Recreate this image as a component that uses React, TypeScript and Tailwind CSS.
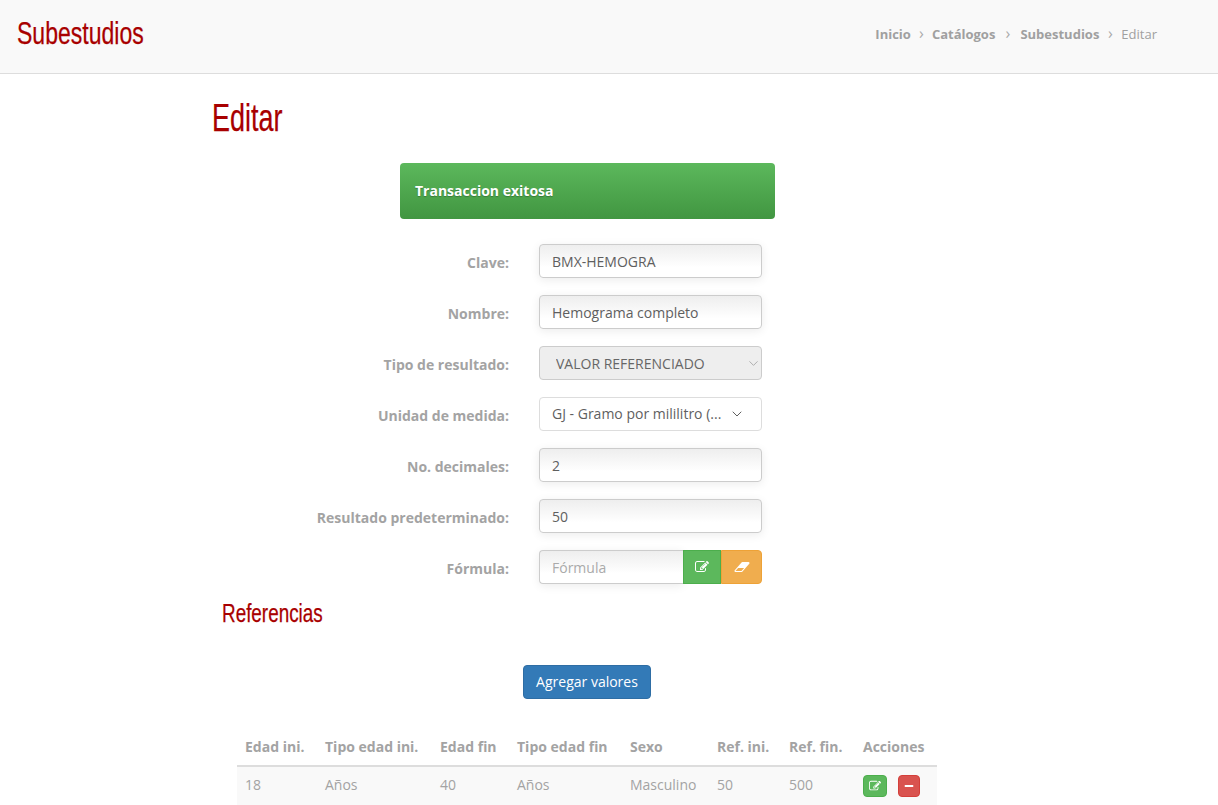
import { FaMinus } from "react-icons/fa";
import { FiChevronDown } from "react-icons/fi";

const inputClass =
  "w-full h-[34px] px-3 text-sm text-[#5f5f5f] rounded border border-[#ccc] bg-gradient-to-b from-[#eeeeee] to-white to-70% shadow-[0_2px_10px_rgba(0,0,0,0.08)] outline-none";

const titleClass =
  "text-[#a80000] font-['Liberation_Sans',sans-serif] [-webkit-text-stroke:0.25px_#a80000] origin-left";

function EditIcon({ size }: { size: number }) {
  return (
    <svg width={size} height={size} viewBox="0 0 1792 1792" fill="currentColor">
      <path d="M888 1184l116-116-152-152-116 116v56h96v96h56zm440-720q-16-16-33 1l-350 350q-17 17-1 33t33-1l350-350q17-17 1-33zm80 594v190q0 119-84.5 203.5t-203.5 84.5h-832q-119 0-203.5-84.5t-84.5-203.5v-832q0-119 84.5-203.5t203.5-84.5h832q63 0 117 25 15 7 18 23 3 17-9 29l-49 49q-14 14-32 8-23-6-45-6h-832q-66 0-113 47t-47 113v832q0 66 47 113t113 47h832q66 0 113-47t47-113v-126q0-13 9-22l64-64q15-15 35-7t20 29zm-96-738l288 288-672 672h-288v-288zm444 132l-92 92-288-288 92-92q28-28 68-28t68 28l152 152q28 28 28 68t-28 68z" />
    </svg>
  );
}

function EraserIcon() {
  return (
    <svg width="16" height="14" viewBox="0 0 2048 1792" fill="currentColor">
      <path d="M960 1408l336-384h-768l-336 384h768zm1013-1077q15 34 9.5 71.5t-30.5 65.5l-896 1024q-38 44-96 44h-768q-38 0-69.5-20.5t-47.5-54.5q-15-34-9.5-71.5t30.5-65.5l896-1024q38-44 96-44h768q38 0 70 20.5t47 54.5z" />
    </svg>
  );
}

function Row({ label, children }: { label: string; children: React.ReactNode }) {
  return (
    <div className="flex items-center h-[34px] mb-[17px]">
      <label className="w-[297px] pt-1 text-right text-sm font-bold text-[#a3a3a3]">{label}</label>
      <div className="ml-[30px] w-[223px]">{children}</div>
    </div>
  );
}

function App() {
  const columns = [
    { title: "Edad ini.", width: "w-[80px]" },
    { title: "Tipo edad ini.", width: "w-[115px]" },
    { title: "Edad fin", width: "w-[77px]" },
    { title: "Tipo edad fin", width: "w-[113px]" },
    { title: "Sexo", width: "w-[87px]" },
    { title: "Ref. ini.", width: "w-[72px]" },
    { title: "Ref. fin.", width: "w-[74px]" },
    { title: "Acciones", width: "w-[82px]" },
  ];
  const values = ["18", "Años", "40", "Años", "Masculino", "50", "500"];

  return (
    <div className="h-screen overflow-hidden bg-white font-['Open_Sans',sans-serif]">
      {/* header */}
      <div className="flex items-center justify-between h-[74px] pl-[17px] pr-[61px] pb-1 bg-[#f9f9f9] border-b border-[#ddd]">
        <h1 className={`${titleClass} mb-[4px] text-[32px] leading-none scale-x-[0.72]`}>Subestudios</h1>
        <div className="flex items-center text-[13px] text-[#a0a0a0]">
          <span className="font-bold">Inicio</span>
          <span className="w-[21px] pb-[3px] text-center text-[16px] leading-none text-[#aaa]">›</span>
          <span className="font-bold">Catálogos</span>
          <span className="w-[25px] pb-[3px] text-center text-[16px] leading-none text-[#aaa]">›</span>
          <span className="font-bold">Subestudios</span>
          <span className="w-[22px] pb-[3px] text-center text-[16px] leading-none text-[#aaa]">›</span>
          <span>Editar</span>
        </div>
      </div>

      <div className="ml-[212px]">
        <h2 className={`${titleClass} pt-[24px] h-[89px] text-[38px] leading-[40px] scale-x-[0.71]`}>Editar</h2>

        <div className="ml-[188px] w-[375px] h-[56px] mb-[25px] flex items-center pl-[15px] rounded bg-gradient-to-b from-[#5cb85c] to-[#419641] text-sm font-bold text-white [text-shadow:0_1px_1px_rgba(0,0,0,0.25)]">
          Transaccion exitosa
        </div>

        <Row label="Clave:">
          <input className={inputClass} readOnly value="BMX-HEMOGRA" />
        </Row>
        <Row label="Nombre:">
          <input className={inputClass} readOnly value="Hemograma completo" />
        </Row>
        <Row label="Tipo de resultado:">
          <div className="relative">
            <select
              disabled
              className="appearance-none w-full h-[34px] pl-4 pt-[2px] text-sm text-[#666] opacity-100 rounded border border-[#ccc] bg-[#eee]"
            >
              <option>VALOR REFERENCIADO</option>
            </select>
            <FiChevronDown size={15} strokeWidth={1.5} className="absolute right-[1px] top-[10px] text-[#aaa]" />
          </div>
        </Row>
        <Row label="Unidad de medida:">
          <div className="flex items-center justify-between w-full h-[34px] pl-3 pr-[16px] text-sm text-[#5f5f5f] rounded border border-[#ddd] bg-white">
            <span>GJ - Gramo por mililitro (...</span>
            <FiChevronDown size={16} strokeWidth={1.5} />
          </div>
        </Row>
        <Row label="No. decimales:">
          <input className={inputClass} readOnly value="2" />
        </Row>
        <Row label="Resultado predeterminado:">
          <input className={inputClass} readOnly value="50" />
        </Row>
        <Row label="Fórmula:">
          <div className="flex">
            <input
              className={`${inputClass} !w-[144px] rounded-r-none border-r-0 placeholder:text-[#aaa]`}
              placeholder="Fórmula"
            />
            <button className="flex items-center justify-center w-[38px] h-[34px] bg-[#5cb85c] border border-[#4cae4c] text-white">
              <EditIcon size={14} />
            </button>
            <button className="flex items-center justify-center w-[41px] h-[34px] bg-[#f0ad4e] border border-[#eea236] rounded-r text-white">
              <EraserIcon />
            </button>
          </div>
        </Row>

        <h3 className={`${titleClass} ml-[10px] -mt-[5px] h-[69px] text-[25px] leading-[34px] scale-x-[0.755]`}>Referencias</h3>

        <div className="ml-[311px] mb-[29px]">
          <button className="h-[34px] w-[128px] rounded bg-[#337ab7] border border-[#2e6da4] text-sm text-white">
            Agregar valores
          </button>
        </div>

        <table className="ml-[25px] w-[700px] table-fixed text-sm">
          <thead>
            <tr className="border-b-2 border-[#ddd]">
              {columns.map((col) => (
                <th key={col.title} className={`${col.width} h-[38px] px-2 text-left font-bold text-[#a3a3a3] whitespace-nowrap`}>
                  {col.title}
                </th>
              ))}
            </tr>
          </thead>
          <tbody>
            <tr className="bg-[#f9f9f9]">
              {values.map((v, i) => (
                <td key={i} className="h-[39px] pb-[2px] px-2 text-[#a3a3a3]">
                  {v}
                </td>
              ))}
              <td className="px-2">
                <div className="flex items-center gap-[11px]">
                  <button className="flex items-center justify-center w-[24px] h-[22px] rounded bg-[#5cb85c] border border-[#4cae4c] text-white">
                    <EditIcon size={12} />
                  </button>
                  <button className="flex items-center justify-center w-[22px] h-[22px] rounded bg-[#d9534f] border border-[#d43f3a] text-white">
                    <FaMinus size={10} />
                  </button>
                </div>
              </td>
            </tr>
          </tbody>
        </table>
      </div>
    </div>
  );
}

export default App;
